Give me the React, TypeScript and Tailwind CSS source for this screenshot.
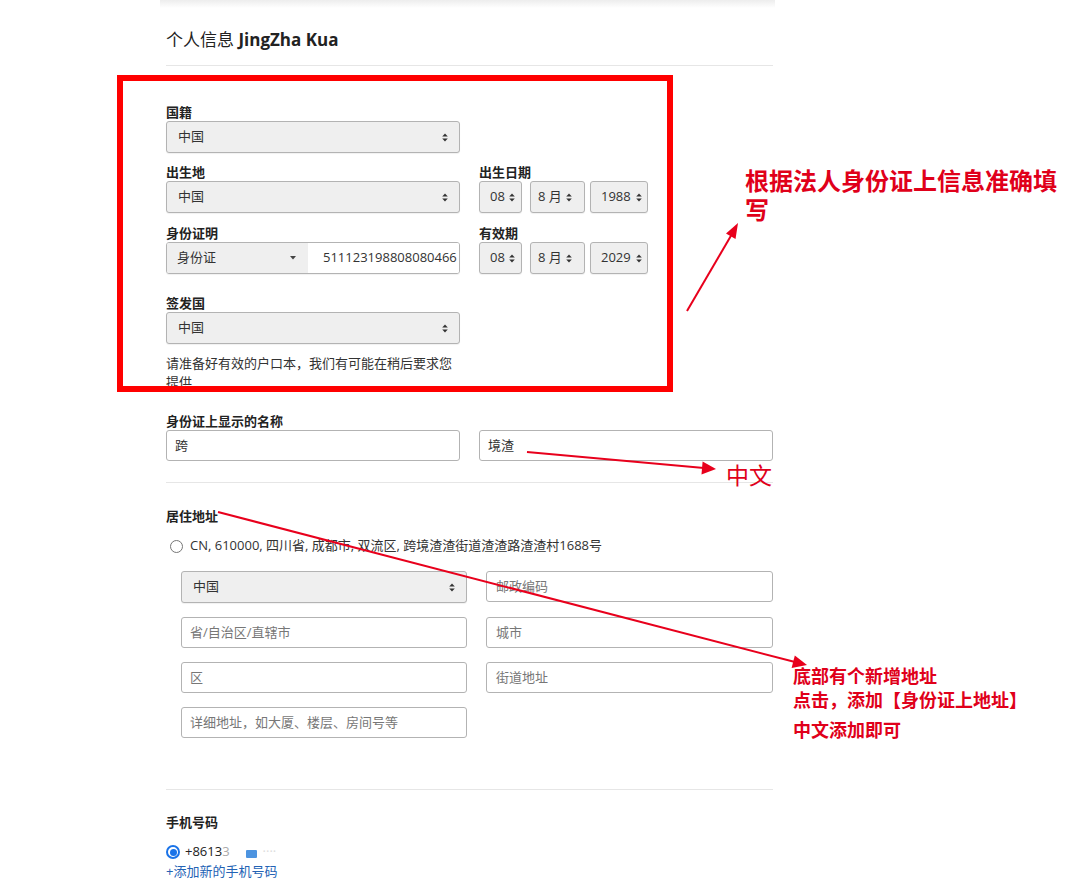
import React from "react";

const UI = { fontFamily: '"Open Sans", "Noto Sans CJK SC", sans-serif' };
const NOTE = { fontFamily: '"Liberation Serif", "Noto Sans CJK SC", serif' };

function UpDown() {
    return (
        <svg width="6" height="9" viewBox="0 0 6 9" className="shrink-0">
            <path d="M3 0.5 L5.8 3.6 H0.2 Z" fill="#333" />
            <path d="M3 8.5 L5.8 5.4 H0.2 Z" fill="#333" />
        </svg>
    );
}

function Select({ text, className = "" }: { text: string; className?: string }) {
    return (
        <div className={`flex h-[32px] items-center justify-between rounded-[3px] border border-[#b3b3b3] bg-[#efefef] text-[13px] text-[#333] shadow-[0_1px_1px_rgba(0,0,0,0.06)] ${className}`}>
            <span className="whitespace-nowrap">{text}</span>
            <UpDown />
        </div>
    );
}

function Input({ value, placeholder, className = "" }: { value?: string; placeholder?: string; className?: string }) {
    return (
        <div className={`flex h-[31px] items-center rounded-[3px] border border-[#b3b3b3] bg-white pl-[8px] text-[13px] ${className}`}>
            {value ? <span className="text-[#333]">{value}</span> : <span className="text-[#777]">{placeholder}</span>}
        </div>
    );
}

function Label({ children }: { children: React.ReactNode }) {
    return <div className="h-[18px] text-[13px] font-bold leading-[18px] text-[#222]">{children}</div>;
}

function DateSelects({ year }: { year: string }) {
    return (
        <div className="flex">
            <Select text="08" className="w-[43px] pl-[10px] pr-[6px]" />
            <Select text="8 月" className="ml-[8px] w-[55px] pl-[7px] pr-[12px]" />
            <Select text={year} className="ml-[5px] w-[58px] pl-[10px] pr-[5px]" />
        </div>
    );
}

export default function App() {
    return (
        <div className="relative h-[880px] w-[1073px] overflow-hidden bg-white" style={UI}>
            {/* card shadow on top */}
            <div className="ml-[160px] h-[8px] w-[615px] bg-gradient-to-b from-[#ededed] to-white" />

            <div className="ml-[166px] w-[607px]">
                <h2 className="mt-[22px] text-[17px] leading-[20px] text-[#222]">
                    个人信息 <span className="font-bold">JingZha Kua</span>
                </h2>
                <div className="mt-[15px] h-px bg-[#e6e6e6]" />

                {/* nationality */}
                <div className="mt-[37px] w-[294px]">
                    <Label>国籍</Label>
                    <Select text="中国" className="pl-[11px] pr-[11px]" />
                </div>

                {/* birth */}
                <div className="mt-[10px] flex gap-[19px]">
                    <div className="w-[294px]">
                        <Label>出生地</Label>
                        <Select text="中国" className="pl-[11px] pr-[11px]" />
                    </div>
                    <div>
                        <Label>出生日期</Label>
                        <DateSelects year="1988" />
                    </div>
                </div>

                {/* id */}
                <div className="mt-[11px] flex gap-[19px]">
                    <div className="w-[294px]">
                        <Label>身份证明</Label>
                        <div className="flex h-[32px] overflow-hidden rounded-[3px] border border-[#b3b3b3] text-[13px] text-[#333] shadow-[0_1px_1px_rgba(0,0,0,0.06)]">
                            <div className="flex w-[141px] items-center justify-between bg-[#efefef] pl-[10px] pr-[12px]">
                                <span>身份证</span>
                                <svg width="6" height="4" viewBox="0 0 6 4">
                                    <path d="M0 0 H6 L3 3.5 Z" fill="#444" />
                                </svg>
                            </div>
                            <div className="flex flex-1 items-center overflow-hidden whitespace-nowrap bg-white pl-[15px]">511123198808080466</div>
                        </div>
                    </div>
                    <div>
                        <Label>有效期</Label>
                        <DateSelects year="2029" />
                    </div>
                </div>

                {/* issuing country */}
                <div className="mt-[20px] w-[294px]">
                    <Label>签发国</Label>
                    <Select text="中国" className="pl-[11px] pr-[11px]" />
                    <p className="mt-[10px] text-[13px] leading-[19px] text-[#333]">请准备好有效的户口本，我们有可能在稍后要求您提供</p>
                </div>

                {/* name on id */}
                <div className="mt-[20px]">
                    <Label>身份证上显示的名称</Label>
                    <div className="flex gap-[19px]">
                        <Input value="跨" className="w-[294px]" />
                        <Input value="境渣" className="w-[294px]" />
                    </div>
                </div>

                <div className="mt-[21px] h-px bg-[#e6e6e6]" />

                {/* address */}
                <div className="mt-[24px]">
                    <Label>居住地址</Label>
                    <div className="mt-[11px] flex h-[20px] items-center text-[13px] text-[#333]">
                        <span className="ml-[4px] h-[13px] w-[13px] rounded-full border border-[#767676] bg-white" />
                        <span className="ml-[7px]">CN, 610000, 四川省, 成都市, 双流区, 跨境渣渣街道渣渣路渣渣村1688号</span>
                    </div>
                    <div className="ml-[15px] mt-[15px] grid grid-cols-[286px_287px] gap-x-[19px] gap-y-[14px]">
                        <Select text="中国" className="h-[31px] pl-[11px] pr-[11px]" />
                        <Input placeholder="邮政编码" className="pl-[9px]" />
                        <Input placeholder="省/自治区/直辖市" />
                        <Input placeholder="城市" className="pl-[9px]" />
                        <Input placeholder="区" />
                        <Input placeholder="街道地址" className="pl-[9px]" />
                        <Input placeholder="详细地址，如大厦、楼层、房间号等" />
                    </div>
                </div>

                <div className="mt-[51px] h-px bg-[#e6e6e6]" />

                {/* phone */}
                <div className="mt-[23px]">
                    <Label>手机号码</Label>
                    <div className="mt-[11px] flex h-[20px] items-center text-[13px]">
                        <span className="flex h-[14px] w-[14px] items-center justify-center rounded-full border-2 border-[#1a73e8] bg-white">
                            <span className="h-[7px] w-[7px] rounded-full bg-[#1a73e8]" />
                        </span>
                        <span className="ml-[5px] text-[#222]">+8613</span>
                        <span className="text-[#aaa]">3</span>
                        <span className="ml-[16px] mt-[3px] h-[8px] w-[11px] rounded-[1px] bg-[#4d94e0]" />
                        <span className="ml-[6px] text-[#ddd]">····</span>
                    </div>
                    <div className="text-[13px] leading-[18px] text-[#2463b5]">+添加新的手机号码</div>
                </div>
            </div>

            {/* annotation overlay */}
            <div className="pointer-events-none absolute left-[117px] top-[75px] h-[317px] w-[556px] border-[6px] border-[#ff0000]" />

            <svg className="pointer-events-none absolute left-0 top-0" width="1073" height="880" viewBox="0 0 1073 880">
                <g stroke="#e8001c" strokeWidth="2" fill="none">
                    <line x1="687" y1="311" x2="732" y2="234" />
                    <line x1="527" y1="452" x2="704" y2="468" />
                    <line x1="218" y1="512" x2="795" y2="662" />
                </g>
                <g fill="#e8001c">
                    <path d="M738 223 L735.5 239 L726 233.5 Z" />
                    <path d="M716 469 L701.5 474.5 L702.6 461.5 Z" />
                    <path d="M807 665 L791.6 668 L794.8 655.5 Z" />
                </g>
            </svg>

            <div className="absolute left-[745px] top-[168px] w-[318px] text-[24px] font-bold leading-[29px] text-[#e0001a]" style={NOTE}>
                根据法人身份证上信息准确填写
            </div>
            <div className="absolute left-[726px] top-[462px] text-[23px] leading-[30px] text-[#e0001a]" style={NOTE}>
                中文
            </div>
            <div className="absolute left-[793px] top-[665px] text-[18px] font-bold text-[#e0001a]" style={NOTE}>
                <div className="leading-[24px]">底部有个新增地址</div>
                <div className="leading-[24px]">点击，添加【身份证上地址】</div>
                <div className="mt-[6px] leading-[24px]">中文添加即可</div>
            </div>
        </div>
    );
}
